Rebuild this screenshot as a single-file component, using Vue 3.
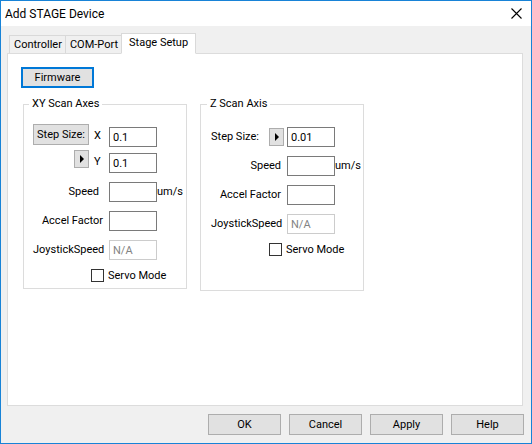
<script setup>
import { ref } from 'vue'

const tabs = ['Controller', 'COM-Port', 'Stage Setup']
const active = ref('Stage Setup')
const actions = ['OK', 'Cancel', 'Apply', 'Help']

const stepX = ref('0.1')
const stepY = ref('0.1')
const stepZ = ref('0.01')
const xy = ref({ speed: '', accel: '', joystick: 'N/A', servo: false })
const z = ref({ speed: '', accel: '', joystick: 'N/A', servo: false })
</script>

<template>
  <main class="dialog">
    <header class="titlebar">
      <h1>Add STAGE Device</h1>
      <button class="close" type="button" aria-label="Close">
        <svg viewBox="0 0 11 11" width="11" height="11" aria-hidden="true">
          <path d="M.5 .5 10.5 10.5M10.5 .5 .5 10.5" stroke="#000" stroke-width="1.1" fill="none" />
        </svg>
      </button>
    </header>

    <nav class="tabs" role="tablist">
      <button
        v-for="tab in tabs"
        :key="tab"
        type="button"
        role="tab"
        class="tab"
        :class="{ active: tab === active }"
        :aria-selected="tab === active"
        @click="active = tab"
      >{{ tab }}</button>
    </nav>

    <section class="page">
      <button type="button" class="btn firmware">Firmware</button>

      <div class="groups">
        <fieldset class="group">
          <legend>XY Scan Axes</legend>
          <div class="rows">
            <div class="steps">
              <div class="step">
                <button type="button" class="btn step-btn">Step Size:</button>
                <label class="axis" for="step-x">X</label>
                <input id="step-x" v-model="stepX" class="field" type="text" />
              </div>
              <div class="step">
                <button type="button" class="btn arrow" aria-label="Step size options">
                  <svg viewBox="0 0 4 8" width="4" height="8" aria-hidden="true"><path d="M0 0 4 4 0 8Z" /></svg>
                </button>
                <label class="axis" for="step-y">Y</label>
                <input id="step-y" v-model="stepY" class="field" type="text" />
              </div>
            </div>
            <div class="row">
              <label class="name short" for="xy-speed">Speed</label>
              <input id="xy-speed" v-model="xy.speed" class="field" type="text" />
              <span class="unit">um/s</span>
            </div>
            <div class="row">
              <label class="name" for="xy-accel">Accel Factor</label>
              <input id="xy-accel" v-model="xy.accel" class="field" type="text" />
            </div>
            <div class="row">
              <label class="name" for="xy-joy">JoystickSpeed</label>
              <input id="xy-joy" v-model="xy.joystick" class="field" type="text" disabled />
            </div>
            <label class="check">
              <input v-model="xy.servo" type="checkbox" />Servo Mode
            </label>
          </div>
        </fieldset>

        <fieldset class="group tall">
          <legend>Z Scan Axis</legend>
          <div class="rows">
            <div class="row">
              <div class="name with-arrow">
                <label for="step-z">Step Size:</label>
                <button type="button" class="btn arrow" aria-label="Z step size options">
                  <svg viewBox="0 0 4 8" width="4" height="8" aria-hidden="true"><path d="M0 0 4 4 0 8Z" /></svg>
                </button>
              </div>
              <input id="step-z" v-model="stepZ" class="field" type="text" />
            </div>
            <div class="row">
              <label class="name" for="z-speed">Speed</label>
              <input id="z-speed" v-model="z.speed" class="field" type="text" />
              <span class="unit">um/s</span>
            </div>
            <div class="row">
              <label class="name" for="z-accel">Accel Factor</label>
              <input id="z-accel" v-model="z.accel" class="field" type="text" />
            </div>
            <div class="row">
              <label class="name" for="z-joy">JoystickSpeed</label>
              <input id="z-joy" v-model="z.joystick" class="field" type="text" disabled />
            </div>
            <label class="check">
              <input v-model="z.servo" type="checkbox" />Servo Mode
            </label>
          </div>
        </fieldset>
      </div>
    </section>

    <footer class="actions">
      <button v-for="a in actions" :key="a" type="button" class="btn action">{{ a }}</button>
    </footer>
  </main>
</template>

<style>
body {
  margin: 0;
}
</style>

<style scoped>
.dialog,
.dialog * {
  box-sizing: border-box;
}
.dialog {
  display: flex;
  flex-direction: column;
  min-height: 100vh;
  border: 1px solid #1883d7;
  background: #f0f0f0;
  color: #000;
  font: 11px/14px Roboto, "Liberation Sans", sans-serif;
}
.dialog button,
.dialog input {
  font: inherit;
  color: inherit;
  margin: 0;
}
.titlebar {
  display: flex;
  align-items: center;
  justify-content: space-between;
  height: 25px;
  padding: 0 9px 0 4px;
  background: #fff;
}
h1 {
  margin: 0;
  font: 12px/16px Roboto, "Liberation Sans", sans-serif;
}
.close {
  display: flex;
  padding: 0;
  border: 0;
  background: none;
}
.tabs {
  display: flex;
  align-items: flex-end;
  height: 28px;
  padding-left: 8px;
  margin-bottom: -1px;
}
.tab {
  height: 19px;
  padding: 0 3px 0 4px;
  border: 1px solid #d9d9d9;
  border-right: 0;
  background: #f0f0f0;
  white-space: nowrap;
}
.tab.active {
  height: 21px;
  padding: 0 7px 2px;
  border-right: 1px solid #d9d9d9;
  border-bottom-color: #fff;
  background: #fff;
  z-index: 1;
}
.page {
  flex: 1;
  margin: 0 8px 0 6px;
  padding: 13px;
  border: 1px solid #dcdcdc;
  background: #fff;
}
.btn {
  display: flex;
  align-items: center;
  justify-content: center;
  height: 21px;
  padding: 0;
  border: 1px solid #adadad;
  background: #e1e1e1;
  white-space: nowrap;
}
.firmware {
  width: 73px;
  border: 2px solid #0078d7;
}
.groups {
  display: flex;
  align-items: flex-start;
  gap: 13px;
  padding: 9px 0 0 2px;
}
.group {
  flex: 0 0 164px;
  min-width: 0;
  margin: 0;
  padding: 13px 0 6px 9px;
  border: 1px solid #dcdcdc;
}
.group.tall {
  padding: 16px 0 34px 10px;
}
legend {
  padding: 0 3px;
  margin-left: -4px;
}
.rows {
  display: flex;
  flex-direction: column;
  gap: 9px;
}
.steps {
  display: flex;
  flex-direction: column;
  gap: 3px;
}
.step {
  display: flex;
  height: 23px;
}
.step .btn {
  margin-left: auto;
}
.step .field {
  align-self: flex-end;
  margin-right: 29px;
}
.step-btn {
  width: 56px;
}
.arrow {
  width: 15px;
  height: 18px;
}
.axis {
  width: 20px;
  padding: 5px 0 0 5px;
}
.row {
  display: flex;
  align-items: center;
}
.name {
  width: 76px;
  padding-right: 6px;
  text-align: right;
  white-space: nowrap;
}
.name.short {
  padding-right: 10px;
}
.with-arrow {
  display: flex;
  align-items: center;
  justify-content: space-between;
  padding-right: 3px;
}
.field {
  width: 48px;
  height: 20px;
  padding: 0 3px;
  border: 1px solid #7a7a7a;
  border-radius: 0;
  background: #fff;
}
.dialog .field:disabled {
  border-color: #ccc;
  color: #838383;
}
.check {
  display: flex;
  align-items: center;
  gap: 4px;
  padding-left: 58px;
  line-height: 13px;
}
.check input {
  appearance: none;
  width: 13px;
  height: 13px;
  border: 1px solid #333;
  background: #fff;
}
.check input:checked {
  background: #333;
  box-shadow: inset 0 0 0 2px #fff;
}
.actions {
  display: flex;
  justify-content: flex-end;
  gap: 8px;
  padding: 8px 7px;
}
.action {
  width: 73px;
}
</style>
